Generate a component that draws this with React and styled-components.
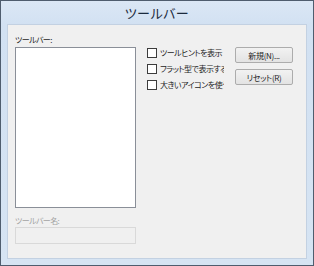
import React from "react";
import styled, { createGlobalStyle } from "styled-components";

const GlobalStyle = createGlobalStyle`
  html, body {
    margin: 0;
    padding: 0;
    background: #ffffff;
  }
  * {
    box-sizing: border-box;
  }
`;

const FONT = `"Noto Sans CJK JP", "Noto Sans", sans-serif`;

const Window = styled.div`
  width: 314px;
  height: 266px;
  border: 1px solid #4f5d6e;
  background: linear-gradient(#dbe7f5 0px, #d2e1f2 24px, #d6e4f3 100%);
  display: flex;
  flex-direction: column;
  font-family: ${FONT};
  font-feature-settings: "palt";
`;

const TitleBar = styled.div`
  height: 23px;
  display: flex;
  align-items: center;
  justify-content: center;
  font-size: 13px;
  color: #1b2a3d;
  letter-spacing: 0.5px;
`;

const Frame = styled.div`
  flex: 1;
  padding: 0 6px 6px 6px;
  display: flex;
`;

const Client = styled.div`
  flex: 1;
  background: #f0f0f0;
  border: 1px solid #c3d1e2;
  padding: 8px 7px 0 7px;
  display: flex;
  align-items: flex-start;
`;

const Column = styled.div`
  display: flex;
  flex-direction: column;
`;

const Label = styled.div`
  font-size: 8px;
  letter-spacing: -0.6px;
  line-height: 13px;
  height: 13px;
  margin-top: ${(p) => (p.$disabled ? "6px" : "0")};
  color: ${(p) => (p.$disabled ? "#a3a3a3" : "#1e1e1e")};
`;

const ListBox = styled.div`
  width: 121px;
  height: 161px;
  margin-top: 1px;
  background: #ffffff;
  border: 1px solid #8a8f98;
`;

const DisabledInput = styled.div`
  width: 121px;
  height: 17px;
  background: #f0f0f0;
  border: 1px solid #d9d9d9;
`;

const Options = styled.div`
  display: flex;
  flex-direction: column;
  gap: 6px;
  margin-left: 11px;
  margin-top: 15px;
`;

const OptionRow = styled.div`
  display: flex;
  align-items: center;
  height: 10px;
`;

const Box = styled.span`
  width: 10px;
  height: 10px;
  border: 1px solid #3c3c3c;
  background: #ffffff;
  flex: none;
`;

const OptionText = styled.span`
  width: 64px;
  margin-left: 3px;
  overflow: hidden;
  white-space: nowrap;
  font-size: 8px;
  letter-spacing: -0.5px;
  line-height: 12px;
  color: #1e1e1e;
`;

const Buttons = styled.div`
  display: flex;
  flex-direction: column;
  gap: 6px;
  margin-left: 11px;
  margin-top: 14px;
`;

const Button = styled.div`
  width: 58px;
  height: 16px;
  border: 1px solid #acacac;
  border-radius: 2px;
  background: linear-gradient(#f2f2f2, #e3e3e3);
  display: flex;
  align-items: center;
  justify-content: center;
  font-size: 8px;
  letter-spacing: -0.3px;
  color: #1e1e1e;
`;

const options = ["ツールヒントを表示", "フラット型で表示する", "大きいアイコンを使う"];

export default function App() {
  return (
    <>
      <GlobalStyle />
      <Window>
        <TitleBar>ツールバー</TitleBar>
        <Frame>
          <Client>
            <Column>
              <Label>ツールバー:</Label>
              <ListBox />
              <Label $disabled>ツールバー名:</Label>
              <DisabledInput />
            </Column>
            <Options>
              {options.map((text) => (
                <OptionRow key={text}>
                  <Box />
                  <OptionText>{text}</OptionText>
                </OptionRow>
              ))}
            </Options>
            <Buttons>
              <Button>新規(N)...</Button>
              <Button>リセット(R)</Button>
            </Buttons>
          </Client>
        </Frame>
      </Window>
    </>
  );
}
